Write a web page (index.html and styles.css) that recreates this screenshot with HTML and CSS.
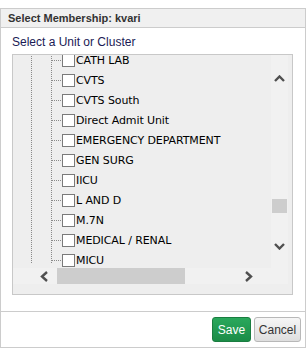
FILE: index.html
```html
<!DOCTYPE html>
<html lang="en">
<head>
    <meta charset="UTF-8">
    <meta name="viewport" content="width=device-width, initial-scale=1.0">
    <title>Select Membership</title>
    <link rel="stylesheet" href="styles.css">
</head>
<body>
    <div class="dialog">
        <div class="dialog-header">Select Membership: kvari</div>
        <div class="dialog-body">
            <div class="prompt">Select a Unit or Cluster</div>
            <div class="tree-box">
                <div class="tree-area">
                    <div class="tree-view">
                        <div class="branch level1">
                            <div class="branch level2">
                                <ul class="tree">
                                    <li><span class="check"></span>CATH LAB</li>
                                    <li><span class="check"></span>CVTS</li>
                                    <li><span class="check"></span>CVTS South</li>
                                    <li><span class="check"></span>Direct Admit Unit</li>
                                    <li><span class="check"></span>EMERGENCY DEPARTMENT</li>
                                    <li><span class="check"></span>GEN SURG</li>
                                    <li><span class="check"></span>IICU</li>
                                    <li><span class="check"></span>L AND D</li>
                                    <li><span class="check"></span>M.7N</li>
                                    <li><span class="check"></span>MEDICAL / RENAL</li>
                                    <li><span class="check"></span>MICU</li>
                                </ul>
                            </div>
                        </div>
                    </div>
                    <div class="vscroll">
                        <svg class="arrow-up" width="11" height="7" viewBox="0 0 11 7"><polyline points="1,6 5.5,1.5 10,6" /></svg>
                        <div class="vthumb"></div>
                        <svg class="arrow-down" width="11" height="7" viewBox="0 0 11 7"><polyline points="1,1 5.5,5.5 10,1" /></svg>
                    </div>
                    <div class="hscroll">
                        <svg class="arrow-left" width="8" height="11" viewBox="0 0 8 11"><polyline points="7,1 2,5.5 7,10" /></svg>
                        <div class="hthumb"></div>
                        <svg class="arrow-right" width="8" height="11" viewBox="0 0 8 11"><polyline points="1,1 6,5.5 1,10" /></svg>
                    </div>
                    <div class="corner"></div>
                </div>
            </div>
        </div>
        <div class="dialog-footer">
            <button class="btn btn-save">Save</button>
            <button class="btn btn-cancel">Cancel</button>
        </div>
    </div>
</body>
</html>
```

FILE: styles.css
```css
:root{
    --cor_borda : #cccccc;
    --cor_cabecalho : #f0f0f0;
    --cor_arvore : #eeeeee;
    --cor_trilho : #f1f1f1;
    --cor_seta : #4f4f4f;
}

body {
    font-family: "Liberation Sans", Arial, sans-serif;
    margin: 0;
    background-color: white;
}

.dialog {
    margin-top: 8px;
    width: 306px;
    height: 340px;
    box-sizing: border-box;
    border: 1px solid var(--cor_borda);
    display: flex;
    flex-direction: column;
}

.dialog-header {
    height: 18px;
    line-height: 18px;
    background-color: var(--cor_cabecalho);
    border-bottom: 1px solid var(--cor_borda);
    padding-left: 7px;
    font-size: 11px;
    font-weight: bold;
    color: #333;
}

.dialog-body {
    flex: 1;
    padding: 7px 0 0 11px;
}

.prompt {
    font-size: 12px;
    line-height: 14px;
    color: #1a1a55;
    margin-bottom: 5px;
}

.tree-box {
    width: 281px;
    height: 241px;
    box-sizing: border-box;
    border: 1px solid #c8c8c8;
    background-color: var(--cor_arvore);
}

.tree-area {
    display: grid;
    grid-template-columns: 258px 17px;
    grid-template-rows: 213px 16px;
}

.tree-view {
    overflow: hidden;
    padding-left: 18px;
}

.branch {
    border-left: 1px dotted #8a8a8a;
    height: 100%;
}

.level2 {
    margin-left: 19px;
}

.tree {
    list-style: none;
    margin: -5px 0 0 0;
    padding: 0;
    font-family: "DejaVu Sans", Verdana, sans-serif;
    font-size: 11px;
    letter-spacing: -0.1px;
    color: #000;
}

.tree li {
    height: 20px;
    display: flex;
    align-items: center;
    white-space: nowrap;
}

.tree li::before {
    content: "";
    width: 9px;
    border-top: 1px dotted #8a8a8a;
    margin-right: 1px;
}

.check {
    width: 13px;
    height: 13px;
    box-sizing: border-box;
    border: 1px solid #7a7a7a;
    background-color: white;
    margin-right: 1px;
    flex: none;
}

.vscroll {
    background-color: var(--cor_trilho);
    display: flex;
    flex-direction: column;
    align-items: center;
}

.vscroll svg,
.hscroll svg {
    fill: none;
    stroke: var(--cor_seta);
    stroke-width: 2.4;
    flex: none;
}

.arrow-up {
    margin-top: 20px;
}

.vthumb {
    width: 15px;
    height: 14px;
    margin-top: 117px;
    background-color: #cdcdcd;
}

.arrow-down {
    margin-top: 30px;
}

.hscroll {
    background-color: var(--cor_trilho);
    display: flex;
    align-items: center;
    padding-left: 27px;
}

.hthumb {
    width: 128px;
    height: 16px;
    margin-left: 9px;
    background-color: #cdcdcd;
}

.arrow-right {
    margin-left: 60px;
}

.corner {
    background-color: var(--cor_trilho);
}

.dialog-footer {
    border-top: 1px solid var(--cor_borda);
    padding: 5px 4px 5px 0;
    display: flex;
    justify-content: flex-end;
    gap: 3px;
}

.btn {
    height: 25px;
    font-family: "Liberation Sans", Arial, sans-serif;
    font-size: 12px;
    border-radius: 3px;
    padding: 0;
    cursor: pointer;
}

.btn-save {
    width: 39px;
    color: white;
    background: linear-gradient(#2aa85c, #1b8c47);
    border: 1px solid #1a7d40;
}

.btn-cancel {
    width: 47px;
    color: #333;
    background: linear-gradient(#f6f6f6, #dedede);
    border: 1px solid #b8b8b8;
}
```
